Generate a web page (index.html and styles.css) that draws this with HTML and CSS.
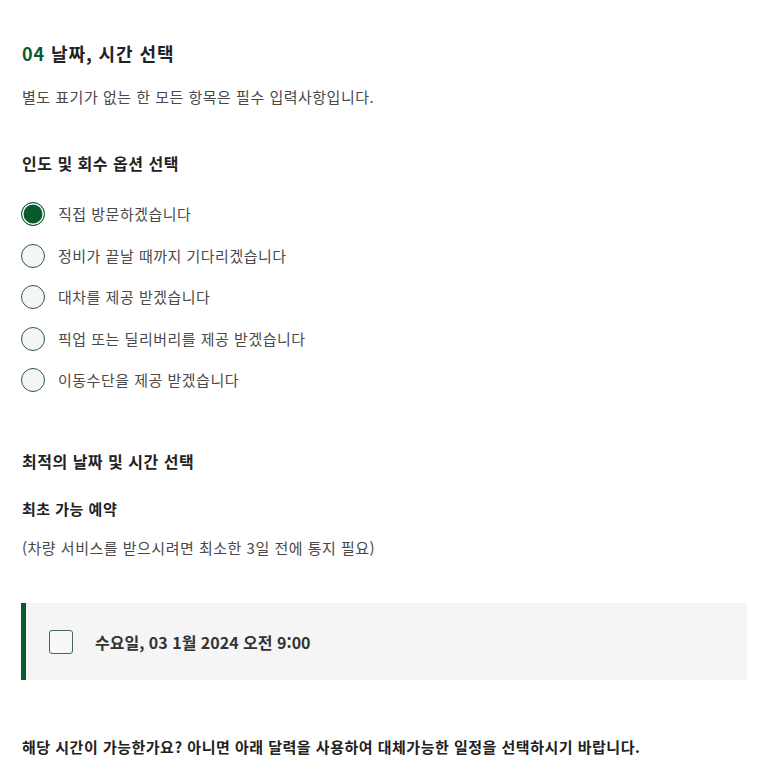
FILE: index.html
```html
<!DOCTYPE html>
<html lang="ko">
<head>
<meta charset="utf-8">
<link rel="stylesheet" href="styles.css">
</head>
<body>
<main class="page">
  <h1 class="title"><span class="step">04</span> 날짜, 시간 선택</h1>
  <p class="subtitle">별도 표기가 없는 한 모든 항목은 필수 입력사항입니다.</p>

  <h2 class="section-title">인도 및 회수 옵션 선택</h2>
  <ul class="radio-list">
    <li class="radio-row"><span class="radio checked"></span><span class="radio-label">직접 방문하겠습니다</span></li>
    <li class="radio-row"><span class="radio"></span><span class="radio-label">정비가 끝날 때까지 기다리겠습니다</span></li>
    <li class="radio-row"><span class="radio"></span><span class="radio-label">대차를 제공 받겠습니다</span></li>
    <li class="radio-row"><span class="radio"></span><span class="radio-label">픽업 또는 딜리버리를 제공 받겠습니다</span></li>
    <li class="radio-row"><span class="radio"></span><span class="radio-label">이동수단을 제공 받겠습니다</span></li>
  </ul>

  <h2 class="section-title section-gap">최적의 날짜 및 시간 선택</h2>
  <h3 class="sub-title">최초 가능 예약</h3>
  <p class="note">(차량 서비스를 받으시려면 최소한 3일 전에 통지 필요)</p>

  <div class="slot-card">
    <span class="checkbox"></span>
    <span class="slot-text">수요일, 03 1월 2024 오전 9:00</span>
  </div>

  <p class="question">해당 시간이 가능한가요? 아니면 아래 달력을 사용하여 대체가능한 일정을 선택하시기 바랍니다.</p>
</main>
</body>
</html>
```

FILE: styles.css
```css
* { box-sizing: border-box; }
html, body { margin: 0; padding: 0; background: #fff; }
body {
  font-family: "Noto Sans CJK KR", "Noto Sans", sans-serif;
  color: #333;
  letter-spacing: 0.5px;
}
.page {
  padding: 41px 23px 0 22px;
}
.title {
  margin: 0;
  font-size: 18px;
  line-height: 24px;
  font-weight: 700;
  color: #222;
  letter-spacing: 0.9px;
}
.step { color: #0b5a2e; }
.subtitle {
  margin: 21px 0 0;
  font-size: 15px;
  line-height: 22px;
  color: #484848;
}
.section-title {
  margin: 44px 0 0;
  font-size: 16px;
  line-height: 22px;
  font-weight: 700;
  color: #222;
}
.radio-list {
  list-style: none;
  margin: 28px 0 0 -1px;
  padding: 0;
  display: flex;
  flex-direction: column;
  gap: 17.5px;
}
.radio-row {
  display: flex;
  align-items: center;
  gap: 13px;
  height: 24px;
}
.radio {
  width: 24px;
  height: 24px;
  border-radius: 50%;
  border: 1.5px solid #2f5a45;
  background: #f4f6f4;
  flex: none;
}
.radio.checked {
  border-color: #0b5a2e;
  background: #0b5a2e;
  box-shadow: inset 0 0 0 1.5px #fff;
}
.radio-label {
  font-size: 15px;
  line-height: 22px;
  color: #4a4a4a;
}
.section-gap { margin-top: 58px; }
.sub-title {
  margin: 26px 0 0;
  font-size: 15px;
  line-height: 22px;
  font-weight: 700;
  color: #222;
}
.note {
  margin: 17px 0 0;
  font-size: 15px;
  line-height: 22px;
  color: #484848;
}
.slot-card {
  margin: 44px 0 0 -1px;
  height: 77px;
  background: #f5f5f5;
  border-left: 5px solid #0b5a2e;
  display: flex;
  align-items: center;
  padding-left: 23px;
  gap: 22px;
}
.checkbox {
  width: 24px;
  height: 24px;
  border: 1.5px solid #3d6b55;
  border-radius: 3px;
  background: #f7f7f7;
  flex: none;
}
.slot-text {
  font-size: 16px;
  line-height: 22px;
  font-weight: 700;
  color: #333;
  letter-spacing: 0;
}
.question {
  margin: 56px 0 0;
  font-size: 15px;
  line-height: 22px;
  font-weight: 700;
  color: #222;
}
```
